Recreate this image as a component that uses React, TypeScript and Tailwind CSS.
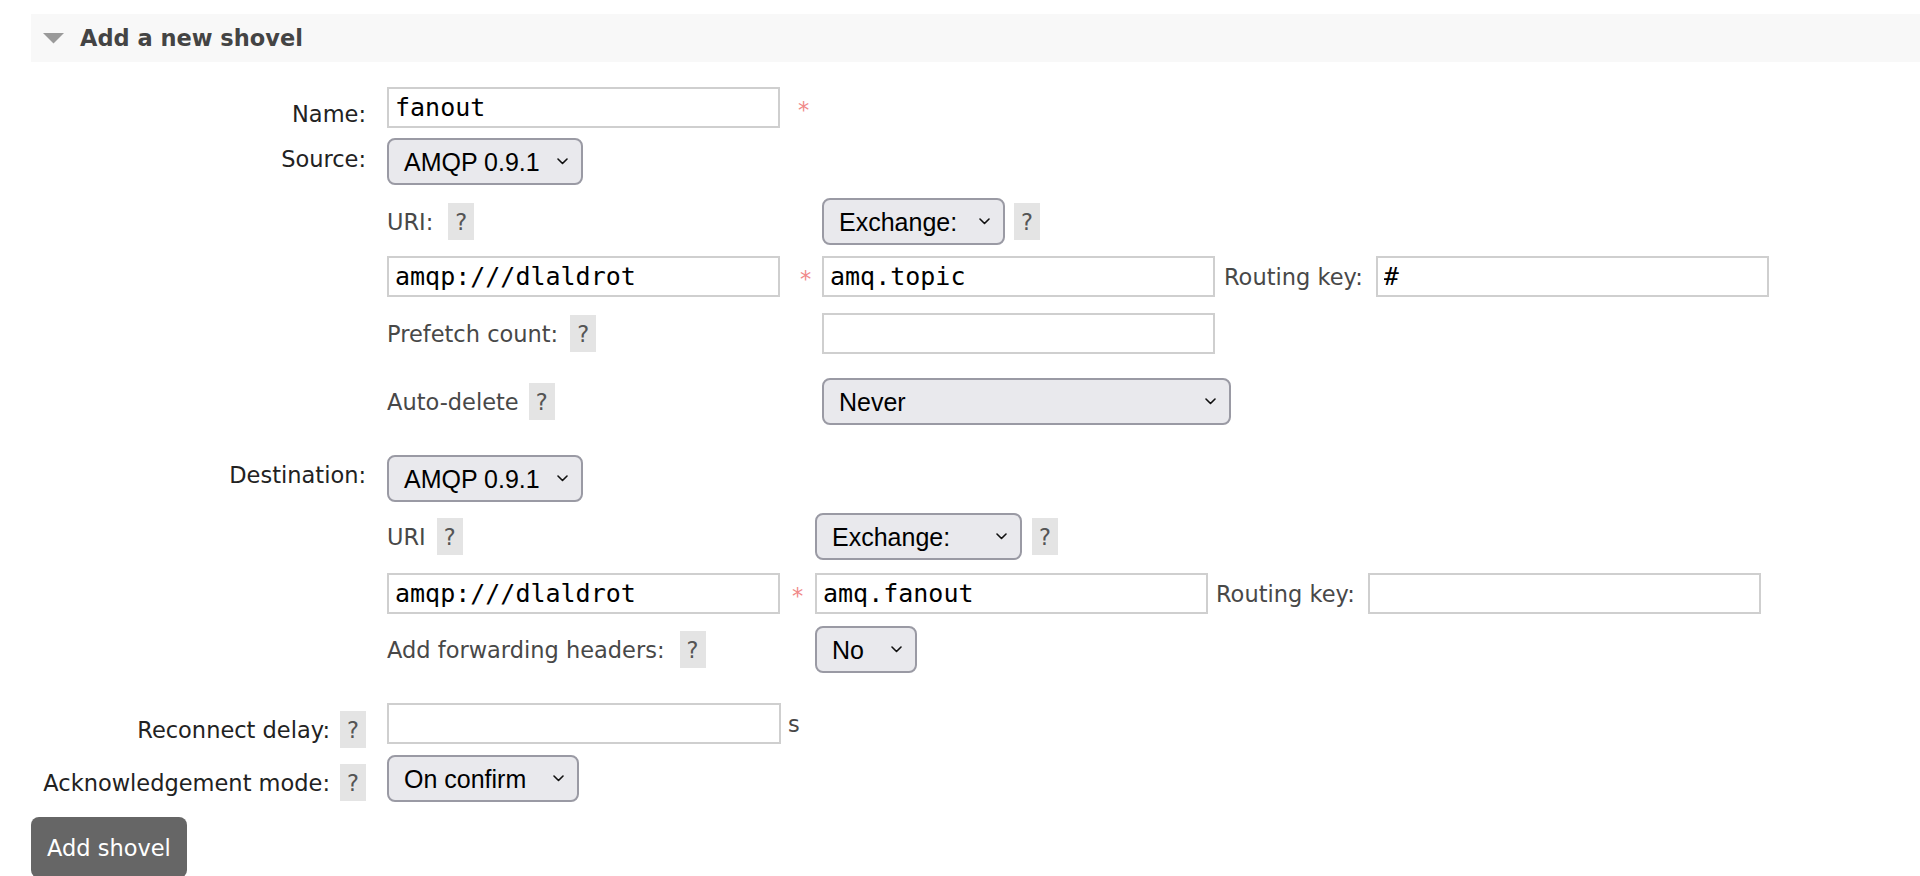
import React from 'react';

const mono = "font-['DejaVu_Sans_Mono',monospace]";

function Help({ className = '' }: { className?: string }) {
  return (
    <span className={`flex h-[37px] w-[26px] shrink-0 items-center justify-center bg-[#e4e4e4] text-[#555] ${className}`}>?</span>
  );
}

function Chevron() {
  return (
    <svg width="11" height="7" viewBox="0 0 11 7" className="shrink-0">
      <polyline points="1,1 5.5,5.5 10,1" fill="none" stroke="#111" strokeWidth="1.6" strokeLinecap="round" strokeLinejoin="round" />
    </svg>
  );
}

function Select({ label, className = '' }: { label: string; className?: string }) {
  return (
    <div className={`flex h-[47px] shrink-0 items-center justify-between rounded-[8px] border-2 border-[#9a9aa4] bg-[#e9e9ed] pl-[15px] pr-[13px] font-['Liberation_Sans',Arial,sans-serif] text-[25px] text-black ${className}`}>
      <span>{label}</span>
      <Chevron />
    </div>
  );
}

function Input({ value = '', className = '' }: { value?: string; className?: string }) {
  return (
    <input
      type="text"
      defaultValue={value}
      className={`h-[41px] w-[393px] shrink-0 border-2 border-[#cfcfcf] bg-white px-[6px] ${mono} text-[25px] text-black outline-none ${className}`}
    />
  );
}

function Mand({ className = '' }: { className?: string }) {
  return <span className={`self-start mt-[10px] text-[#f08a8a] ${className}`}>*</span>;
}

export default function App() {
  return (
    <div className="h-[876px] w-full overflow-hidden bg-white font-['DejaVu_Sans',Verdana,sans-serif] text-[22.5px] leading-[26px] text-[#484848]">
      {/* section header */}
      <div className="mt-[14px] ml-[31px] flex h-[48px] items-center bg-[#f8f8f8] pl-[12px]">
        <svg width="21" height="11" viewBox="0 0 21 11" className="shrink-0">
          <polygon points="0,0 21,0 10.5,10.5" fill="#9a9a9a" />
        </svg>
        <span className="ml-[16px] font-bold text-[#444]">Add a new shovel</span>
      </div>

      <div className="pl-[31px]">
        {/* Name */}
        <div className="mt-[25px] flex items-start">
          <div className="w-[335px] pt-[14px] text-right text-[#222]">Name:</div>
          <div className="ml-[21px] flex">
            <Input value="fanout" />
            <Mand className="ml-[18px]" />
          </div>
        </div>

        {/* Source */}
        <div className="mt-[9px] flex items-start">
          <div className="w-[335px] pt-[9px] text-right text-[#222]">Source:</div>
          <div className="ml-[21px] flex flex-col">
            <Select label="AMQP 0.9.1" className="mt-[1px] w-[196px]" />

            <div className="mt-[13px] flex h-[47px] items-center">
              <div className="flex w-[435px] items-center">
                <span>URI:</span>
                <Help className="ml-[15px]" />
              </div>
              <Select label="Exchange:" className="w-[183px]" />
              <Help className="ml-[9px]" />
            </div>

            <div className="mt-[11px] flex h-[41px] items-center">
              <div className="flex w-[435px] items-center">
                <Input value="amqp:///dlaldrot" />
                <Mand className="ml-[20px]" />
              </div>
              <Input value="amq.topic" />
              <span className="ml-[9px] whitespace-nowrap">Routing key:</span>
              <Input value="#" className="ml-[13px]" />
            </div>

            <div className="mt-[16px] flex h-[41px] items-center">
              <div className="flex w-[435px] items-center">
                <span>Prefetch count:</span>
                <Help className="ml-[12px]" />
              </div>
              <Input />
            </div>

            <div className="mt-[24px] flex h-[47px] items-center">
              <div className="flex w-[435px] items-center">
                <span>Auto-delete</span>
                <Help className="ml-[10px]" />
              </div>
              <Select label="Never" className="w-[409px]" />
            </div>
          </div>
        </div>

        {/* Destination */}
        <div className="mt-[30px] flex items-start">
          <div className="w-[335px] pt-[7px] text-right text-[#222]">Destination:</div>
          <div className="ml-[21px] flex flex-col">
            <Select label="AMQP 0.9.1" className="w-[196px]" />

            <div className="mt-[11px] flex h-[47px] items-center">
              <div className="flex w-[428px] items-center">
                <span>URI</span>
                <Help className="ml-[11px]" />
              </div>
              <Select label="Exchange:" className="w-[207px]" />
              <Help className="ml-[10px]" />
            </div>

            <div className="mt-[13px] flex h-[41px] items-center">
              <div className="flex w-[428px] items-center">
                <Input value="amqp:///dlaldrot" />
                <Mand className="ml-[12px]" />
              </div>
              <Input value="amq.fanout" />
              <span className="ml-[8px] whitespace-nowrap">Routing key:</span>
              <Input className="ml-[13px]" />
            </div>

            <div className="mt-[12px] flex h-[47px] items-center">
              <div className="flex w-[428px] items-center">
                <span className="whitespace-nowrap">Add forwarding headers:</span>
                <Help className="ml-[15px]" />
              </div>
              <Select label="No" className="w-[102px]" />
            </div>
          </div>
        </div>

        {/* Reconnect delay */}
        <div className="mt-[30px] flex items-start">
          <div className="flex w-[335px] items-center justify-end pt-[8px] text-[#222]">
            <span>Reconnect delay:</span>
            <Help className="ml-[10px]" />
          </div>
          <div className="ml-[21px] flex items-center">
            <Input className="w-[394px]" />
            <span className="ml-[7px]">s</span>
          </div>
        </div>

        {/* Acknowledgement mode */}
        <div className="mt-[7px] flex items-start">
          <div className="flex w-[335px] items-center justify-end pt-[9px] text-[#222]">
            <span className="whitespace-nowrap">Acknowledgement mode:</span>
            <Help className="ml-[10px]" />
          </div>
          <div className="ml-[21px]">
            <Select label="On confirm" className="w-[192px]" />
          </div>
        </div>

        <button className="mt-[15px] flex h-[61px] w-[156px] items-center rounded-[8px] bg-[#666] pl-[16px] text-white">
          Add shovel
        </button>
      </div>
    </div>
  );
}
